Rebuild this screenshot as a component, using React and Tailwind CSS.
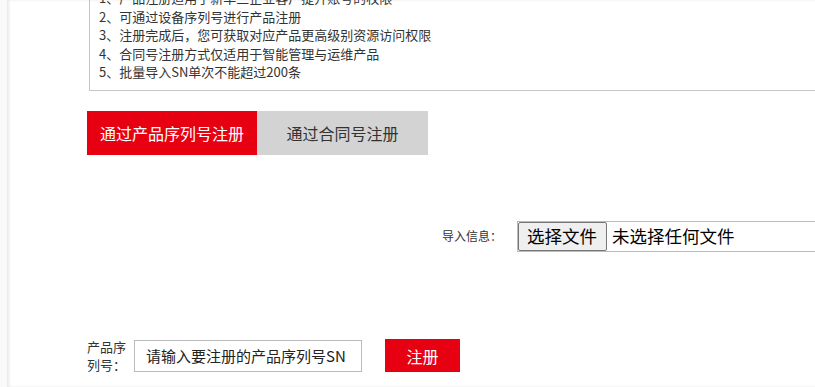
export default function App() {
  const font = { fontFamily: '"Noto Sans CJK SC", "Noto Sans", sans-serif' };
  return (
    <div className="w-[815px] h-[387px] overflow-hidden bg-[#fafafa] flex text-[#333]" style={font}>
      <div className="ml-[7px] flex-1 bg-white shadow-[inset_2px_0_3px_rgba(0,0,0,0.09)] flex flex-col pl-[80px]">
        <div className="mt-[-22px] ml-[2px] w-[760px] shrink-0 border border-[#c6c6c6] pt-[10px] pb-[8px] pl-[9px] text-[13px] leading-[18.6px] text-[#333]">
          <p>1、产品注册适用于新华三企业客户提升账号的权限</p>
          <p>2、可通过设备序列号进行产品注册</p>
          <p>3、注册完成后，您可获取对应产品更高级别资源访问权限</p>
          <p>4、合同号注册方式仅适用于智能管理与运维产品</p>
          <p>5、批量导入SN单次不能超过200条</p>
        </div>

        <div className="mt-[20px] flex shrink-0">
          <div className="w-[170px] h-[44px] bg-[#e60012] text-white text-[16px] flex items-center justify-center">
            通过产品序列号注册
          </div>
          <div className="w-[171px] h-[44px] bg-[#d3d3d3] text-[#333] text-[16px] flex items-center justify-center">
            通过合同号注册
          </div>
        </div>

        <div className="mt-[66px] ml-[355px] flex items-center shrink-0">
          <span className="text-[12px] text-[#333] w-[61px] whitespace-nowrap">导入信息：</span>
          <div className="ml-[14px] w-[320px] h-[31px] border border-[#bcbcbc] flex items-center shrink-0 bg-white">
            <div className="h-[29px] pl-[8px] pr-[9px] border border-[#767676] rounded-[2px] bg-[#efefef] text-[17.5px] text-black flex items-center whitespace-nowrap">
              选择文件
            </div>
            <span className="ml-[5px] text-[17.5px] text-black whitespace-nowrap">未选择任何文件</span>
          </div>
        </div>

        <div className="mt-[86px] flex items-center shrink-0">
          <div className="w-[41px] text-[13px] leading-[18px] text-[#333]">产品序列号：</div>
          <div className="ml-[6px] w-[228px] h-[32px] border border-[#bcbcbc] bg-white flex items-center pl-[11px] text-[15px] text-[#222] whitespace-nowrap overflow-hidden">
            请输入要注册的产品序列号SN
          </div>
          <button className="ml-[23px] w-[75px] h-[33px] bg-[#e60012] text-white text-[16px] flex items-center justify-center">
            注册
          </button>
        </div>
      </div>
    </div>
  );
}
